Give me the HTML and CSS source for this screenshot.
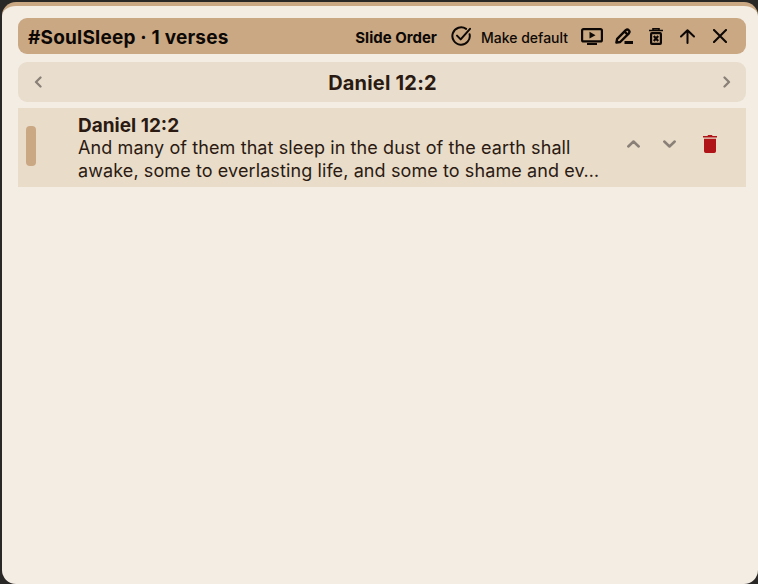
FILE: index.html
```html
<!DOCTYPE html>
<html lang="en">
<head>
    <meta charset="UTF-8">
    <meta name="viewport" content="width=device-width, initial-scale=1.0">
    <title>Slide Order</title>
    <link rel="stylesheet" href="styles.css">
</head>
<body>
    <div class="panel">
        <div class="toolbar">
            <div class="toolbar-title">#SoulSleep · 1 verses</div>
            <div class="toolbar-actions">
                <button class="slide-order">Slide Order</button>
                <button class="default-button">
                    <svg class="icon-check" viewBox="0 0 20 20" fill="none" stroke="currentColor" stroke-width="2" stroke-linecap="round" stroke-linejoin="round"><path d="M18.600 8.200a8.700 8.700 0 1 1-3.500-5.300"/><path d="M6 9.600l3.700 3.800L19 2.800"/></svg>
                    <span>Make default</span>
                </button>
                <button class="icon-button">
                    <svg class="icon-present" viewBox="0 0 22 17" fill="none" stroke="currentColor" stroke-width="2.200"><rect x="1.100" y="1.100" width="19.800" height="12.300" rx="1.500"/><path d="M8.500 3.800l6 3.400-6 3.400z" fill="currentColor" stroke="none"/><path d="M6 16h10" stroke-width="2.200"/></svg>
                </button>
                <button class="icon-button">
                    <svg class="icon-pen" viewBox="0 0 18 16" fill="none" stroke="currentColor" stroke-width="2.400" stroke-linejoin="round"><path d="M1.400 14.600l.8-3.800L10.800 2.200a2.200 2.200 0 0 1 3.100 3.100L5.200 14z"/><path d="M9.500 3.500l3.200 3.100"/><path d="M9.500 14.500H18" stroke-width="3"/></svg>
                </button>
                <button class="icon-button">
                    <svg class="icon-trash" viewBox="0 0 14 17" fill="none" stroke="currentColor" stroke-width="2.200"><path d="M0 2.500h14M4 2V.8h6V2" stroke-width="1.600"/><rect x="2.100" y="5.100" width="9.800" height="10.800" rx=".8"/><path d="M4.800 8l4.400 5M9.200 8l-4.400 5" stroke-width="2.200"/></svg>
                </button>
                <button class="icon-button">
                    <svg class="icon-arrow" viewBox="0 0 15 15" fill="none" stroke="currentColor" stroke-width="2" stroke-linecap="round" stroke-linejoin="round"><path d="M7.500 14V1.200M1 7.500l6.500-6.300L14 7.500"/></svg>
                </button>
                <button class="icon-button">
                    <svg class="icon-close" viewBox="0 0 14 14" fill="none" stroke="currentColor" stroke-width="2.100" stroke-linecap="round"><path d="M1 1l12 12M13 1L1 13"/></svg>
                </button>
            </div>
        </div>

        <div class="verse-nav">
            <svg class="nav-chevron" viewBox="0 0 8 12" fill="none" stroke="currentColor" stroke-width="2.300" stroke-linecap="round" stroke-linejoin="round"><path d="M6.500 1.500L2 6l4.500 4.500"/></svg>
            <div class="verse-nav-title">Daniel 12:2</div>
            <svg class="nav-chevron" viewBox="0 0 8 12" fill="none" stroke="currentColor" stroke-width="2.300" stroke-linecap="round" stroke-linejoin="round"><path d="M1.500 1.500L6 6l-4.500 4.500"/></svg>
        </div>

        <div class="verse-row">
            <div class="drag-handle"></div>
            <div class="verse-body">
                <div class="verse-ref">Daniel 12:2</div>
                <div class="verse-text">And many of them that sleep in the dust of the earth shall awake, some to everlasting life, and some to shame and ev…</div>
            </div>
            <div class="verse-actions">
                <svg class="row-chevron" viewBox="0 0 13 8" fill="none" stroke="currentColor" stroke-width="2.500" stroke-linecap="round" stroke-linejoin="round"><path d="M1.300 6.500l5.200-5 5.200 5"/></svg>
                <svg class="row-chevron" viewBox="0 0 13 8" fill="none" stroke="currentColor" stroke-width="2.500" stroke-linecap="round" stroke-linejoin="round"><path d="M1.300 1.500l5.200 5 5.200-5"/></svg>
                <svg class="row-trash" viewBox="0 0 14 18" fill="currentColor"><path d="M5 0h4l.5 1H14v1.600H0V1h4.500z"/><path d="M1 3.800h12v12.400a1.800 1.800 0 0 1-1.800 1.800H2.800A1.800 1.800 0 0 1 1 16.200z"/></svg>
            </div>
        </div>
    </div>
</body>
</html>
```

FILE: styles.css
```css
html, body {
    margin: 0;
    padding: 0;
    height: 100%;
}
body {
    background: #2a2826;
    font-family: Inter, "Liberation Sans", sans-serif;
    color: #2a1a12;
    overflow: hidden;
}
button {
    background: none;
    border: none;
    padding: 0;
    margin: 0;
    font: inherit;
    color: inherit;
    display: flex;
    align-items: center;
}
svg {
    display: block;
    flex: none;
}
.panel {
    box-sizing: border-box;
    height: 582px;
    margin: 2px 0 0 2px;
    padding: 12px 12px 0 16px;
    background: #f4ede4;
    border-top: 4px solid #c9a883;
    border-radius: 14px;
}
.toolbar {
    height: 36px;
    display: flex;
    align-items: center;
    justify-content: space-between;
    padding: 0 19px 0 10px;
    background: #c9a883;
    border-radius: 9px;
    color: #0d0805;
}
.toolbar-title {
    font-size: 19px;
    font-weight: 700;
    letter-spacing: 0.2px;
    padding-top: 2px;
}
.toolbar-actions {
    display: flex;
    align-items: center;
}
.slide-order {
    font-size: 15px;
    font-weight: 700;
    margin-right: 14px;
    padding-top: 2px;
}
.default-button {
    font-size: 14px;
    font-weight: 500;
    margin-right: 13px;
}
.default-button span {
    margin-left: 10px;
    padding-top: 2px;
}
.icon-check { width: 20px; height: 20px; }
.icon-present { width: 22px; height: 17px; }
.icon-pen { width: 18px; height: 16px; margin-left: 12px; }
.icon-trash { width: 14px; height: 17px; margin-left: 16px; }
.icon-arrow { width: 15px; height: 15px; margin-left: 17px; }
.icon-close { width: 14px; height: 14px; margin-left: 18px; }
.verse-nav {
    height: 40px;
    margin-top: 8px;
    display: flex;
    align-items: center;
    justify-content: space-between;
    padding: 0 15px 0 16px;
    background: #e9decd;
    border-radius: 9px;
}
.verse-nav-title {
    font-size: 20px;
    font-weight: 700;
    letter-spacing: 0.2px;
    padding-top: 2px;
}
.nav-chevron {
    width: 8px;
    height: 12px;
    color: #8a8078;
}
.verse-row {
    height: 79px;
    margin-top: 6px;
    display: flex;
    align-items: flex-start;
    background: #e9dcc9;
}
.drag-handle {
    width: 10px;
    height: 40px;
    margin: 18px 0 0 8px;
    flex: none;
    background: #c9a883;
    border-radius: 4px;
}
.verse-body {
    width: 530px;
    margin-left: 42px;
    padding-top: 7px;
}
.verse-ref {
    font-size: 19px;
    font-weight: 700;
    line-height: 21px;
}
.verse-text {
    font-size: 18px;
    line-height: 23px;
    letter-spacing: 0.1px;
}
.verse-actions {
    display: flex;
    align-items: center;
    margin: 27px 0 0 19px;
}
.row-chevron {
    width: 13px;
    height: 8px;
    color: #8a8078;
    margin-right: 23px;
}
.row-chevron + .row-chevron {
    margin-right: 27px;
}
.row-trash {
    width: 14px;
    height: 18px;
    color: #b01419;
}
```
